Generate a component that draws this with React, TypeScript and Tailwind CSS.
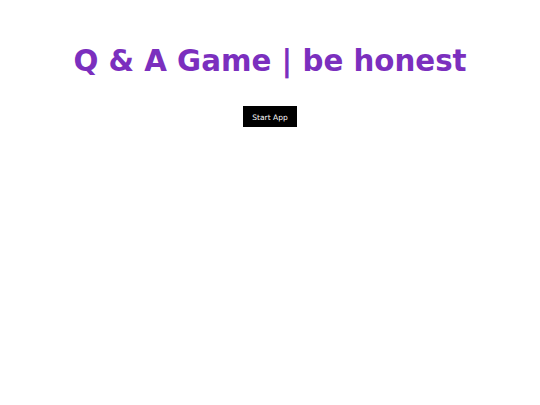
export default function App() {
  return (
    <div className="min-h-screen bg-white flex flex-col items-center" style={{ fontFamily: '"DejaVu Sans", Verdana, sans-serif' }}>
      <h1 className="mt-[43px] text-[29.3px] leading-[36px] font-bold text-[#7b2fbe]">Q &amp; A Game | be honest</h1>
      <button className="mt-[27px] w-[54px] h-[21px] bg-black text-white text-[7.5px] leading-[21px] flex items-center justify-center pt-px">Start App</button>
    </div>
  );
}
